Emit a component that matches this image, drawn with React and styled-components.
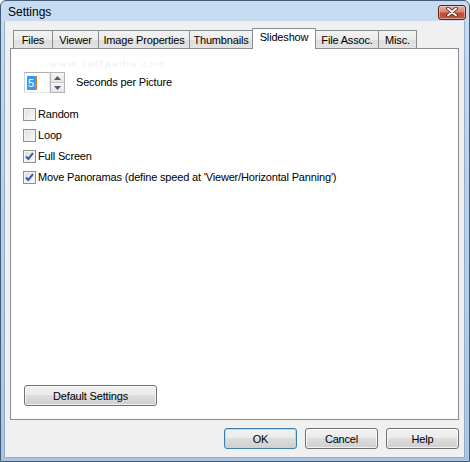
import React, { useState } from "react";
import styled, { createGlobalStyle, css } from "styled-components";

const GlobalStyle = createGlobalStyle`
  html, body {
    margin: 0;
    padding: 0;
    background: #ffffff;
  }
  * {
    box-sizing: border-box;
  }
`;

const Window = styled.div`
  position: relative;
  width: 470px;
  height: 462px;
  display: flex;
  flex-direction: column;
  border: 1px solid #445c78;
  border-radius: 6px 6px 0 0;
  background: linear-gradient(180deg, #c8dcf1 0%, #b9d1eb 40%, #a9c5e4 100%);
  font-family: "Liberation Sans", Arial, sans-serif;
  font-size: 11px;
  letter-spacing: -0.17px;
  line-height: 13px;
  color: #000;
  overflow: hidden;
`;

const TitleBar = styled.div`
  height: 22px;
  display: flex;
  align-items: center;
  justify-content: space-between;
  padding: 0 3px 0 7px;
`;

const Title = styled.span`
  font-size: 12px;
  letter-spacing: 0;
  color: #000;
  padding-top: 3px;
`;

const CloseButton = styled.div`
  width: 28px;
  height: 15px;
  margin-top: 2px;
  border: 1px solid #5d2218;
  border-radius: 3px;
  background: linear-gradient(180deg, #e7b3a8 0%, #d8836f 45%, #c24a30 55%, #c9583c 100%);
  display: flex;
  align-items: center;
  justify-content: center;
  box-shadow: inset 0 0 0 1px rgba(255, 220, 210, 0.5);
`;

const Client = styled.div`
  flex: 1;
  display: flex;
  flex-direction: column;
  margin: 0 4px 3px 3px;
  padding: 7px 5px 8px 5px;
  background: #f0f0f0;
  border: 1px solid #93abc6;
  border-top: none;
`;

const TabRow = styled.div`
  height: 20px;
  display: flex;
  align-items: flex-end;
  padding-left: 3px;
`;

const Tab = styled.div`
  height: 18px;
  padding-top: 3px;
  text-align: center;
  white-space: nowrap;
  border: 1px solid #898c95;
  border-bottom: none;
  border-right-width: 0;
  background: linear-gradient(180deg, #f3f3f3 0%, #ebebeb 50%, #dedede 51%, #e3e3e3 100%);
  &:last-child {
    border-right-width: 1px;
  }
  ${(p) =>
    p.$active &&
    css`
      height: 21px;
      margin-bottom: -1px;
      padding-top: 2px;
      background: #ffffff;
      border-right-width: 1px;
      position: relative;
      z-index: 1;
      & + div {
        border-left-width: 0;
      }
    `}
`;

const Panel = styled.div`
  height: 372px;
  display: flex;
  flex-direction: column;
  padding: 23px 12px 13px 12px;
  background: #ffffff;
  border: 1px solid #898c95;
`;

const SpinRow = styled.div`
  display: flex;
  align-items: center;
  gap: 11px;
  margin-bottom: 11px;
  padding-left: 1px;
`;

const Spinner = styled.div`
  width: 41px;
  height: 21px;
  display: flex;
`;

const SpinInput = styled.div`
  width: 26px;
  height: 21px;
  padding: 3px 0 0 2px;
  display: flex;
  border: 1px solid #e3e9ef;
  border-top-color: #abadb3;
  border-left-color: #c2d6ea;
`;

const Selected = styled.span`
  display: inline-block;
  height: 14px;
  padding: 0 1px;
  line-height: 14px;
  background: #3399ff;
  color: #ffffff;
`;

const Caret = styled.span`
  display: inline-block;
  width: 2px;
  height: 14px;
  background: #e27a1f;
`;

const SpinButtons = styled.div`
  width: 15px;
  height: 21px;
  display: flex;
  flex-direction: column;
  border: 1px solid #b3b3b3;
  background: #eeeeee;
`;

const SpinButton = styled.div`
  flex: 1;
  display: flex;
  align-items: center;
  justify-content: center;
  background: linear-gradient(180deg, #f7f7f7, #e4e4e4);
  & + & {
    border-top: 1px solid #c6c6c6;
  }
`;

const CheckRow = styled.label`
  height: 21px;
  display: flex;
  align-items: center;
  gap: 2px;
  cursor: default;
`;

const Box = styled.span`
  width: 13px;
  height: 13px;
  flex: none;
  border: 1px solid #8f8f8f;
  background: linear-gradient(135deg, #dcdcdc 0%, #f0f0f0 60%, #fbfbfb 100%);
  box-shadow: inset 0 0 0 1px #f4f4f4;
  display: flex;
  align-items: center;
  justify-content: center;
`;

const ButtonBase = styled.div`
  height: 21px;
  padding-top: 1px;
  display: flex;
  align-items: center;
  justify-content: center;
  border: 1px solid #707070;
  border-radius: 3px;
  background: linear-gradient(180deg, #f2f2f2 0%, #ebebeb 45%, #dddddd 50%, #cfcfcf 100%);
  box-shadow: inset 0 0 0 1px rgba(255, 255, 255, 0.7);
  ${(p) =>
    p.$default &&
    css`
      border-color: #3c7fb1;
      box-shadow: inset 0 0 0 1px #a9dcf6;
    `}
`;

const DefaultButton = styled(ButtonBase)`
  width: 133px;
  margin-top: auto;
  margin-left: 1px;
`;

const Footer = styled.div`
  display: flex;
  justify-content: flex-end;
  gap: 8px;
  margin-top: 8px;
`;

const FooterButton = styled(ButtonBase)`
  width: 73px;
`;

const Watermark = styled.div`
  position: absolute;
  left: 48px;
  top: 57px;
  font-family: "DejaVu Sans", sans-serif;
  font-size: 9px;
  font-weight: bold;
  letter-spacing: 1px;
  color: rgba(120, 120, 120, 0.09);
  pointer-events: none;
  z-index: 3;
`;

const tabs = [
  { label: "Files", width: 39 },
  { label: "Viewer", width: 46 },
  { label: "Image Properties", width: 91 },
  { label: "Thumbnails", width: 63 },
  { label: "Slideshow", width: 64 },
  { label: "File Assoc.", width: 62 },
  { label: "Misc.", width: 39 },
];

const options = [
  { label: "Random", checked: false },
  { label: "Loop", checked: false },
  { label: "Full Screen", checked: true },
  { label: "Move Panoramas (define speed at 'Viewer/Horizontal Panning')", checked: true },
];

function CheckMark() {
  return (
    <svg width="9" height="9" viewBox="0 0 9 9">
      <path d="M1 4.5 L3.3 7 L8 1.2" fill="none" stroke="#3e5aa0" strokeWidth="2" />
    </svg>
  );
}

export default function App() {
  const [active, setActive] = useState("Slideshow");
  const [checks, setChecks] = useState(options.map((o) => o.checked));

  return (
    <>
      <GlobalStyle />
      <Window>
        <TitleBar>
          <Title>Settings</Title>
          <CloseButton>
            <svg width="14" height="10" viewBox="0 0 14 10">
              <path d="M3 1.5 L11 8.5 M11 1.5 L3 8.5" stroke="#4a1a12" strokeWidth="3.6" strokeLinecap="round" />
              <path d="M3 1.5 L11 8.5 M11 1.5 L3 8.5" stroke="#ffffff" strokeWidth="2" strokeLinecap="round" />
            </svg>
          </CloseButton>
        </TitleBar>
        <Client>
          <TabRow>
            {tabs.map((t) => (
              <Tab
                key={t.label}
                $active={t.label === active}
                style={{ width: t.width }}
                onClick={() => setActive(t.label)}
              >
                {t.label}
              </Tab>
            ))}
          </TabRow>
          <Panel>
            <SpinRow>
              <Spinner>
                <SpinInput>
                  <Selected>5</Selected>
                  <Caret />
                </SpinInput>
                <SpinButtons>
                  <SpinButton>
                    <svg width="7" height="4" viewBox="0 0 7 4">
                      <path d="M0 4 L3.5 0 L7 4 Z" fill="#4b5d78" />
                    </svg>
                  </SpinButton>
                  <SpinButton>
                    <svg width="7" height="4" viewBox="0 0 7 4">
                      <path d="M0 0 L3.5 4 L7 0 Z" fill="#4b5d78" />
                    </svg>
                  </SpinButton>
                </SpinButtons>
              </Spinner>
              <span>Seconds per Picture</span>
            </SpinRow>
            {options.map((o, i) => (
              <CheckRow
                key={o.label}
                onClick={() => setChecks((prev) => prev.map((c, j) => (j === i ? !c : c)))}
              >
                <Box>{checks[i] && <CheckMark />}</Box>
                <span>{o.label}</span>
              </CheckRow>
            ))}
            <DefaultButton>Default Settings</DefaultButton>
          </Panel>
          <Footer>
            <FooterButton $default>OK</FooterButton>
            <FooterButton>Cancel</FooterButton>
            <FooterButton>Help</FooterButton>
          </Footer>
        </Client>
        <Watermark>www.softpedia.com</Watermark>
      </Window>
    </>
  );
}
